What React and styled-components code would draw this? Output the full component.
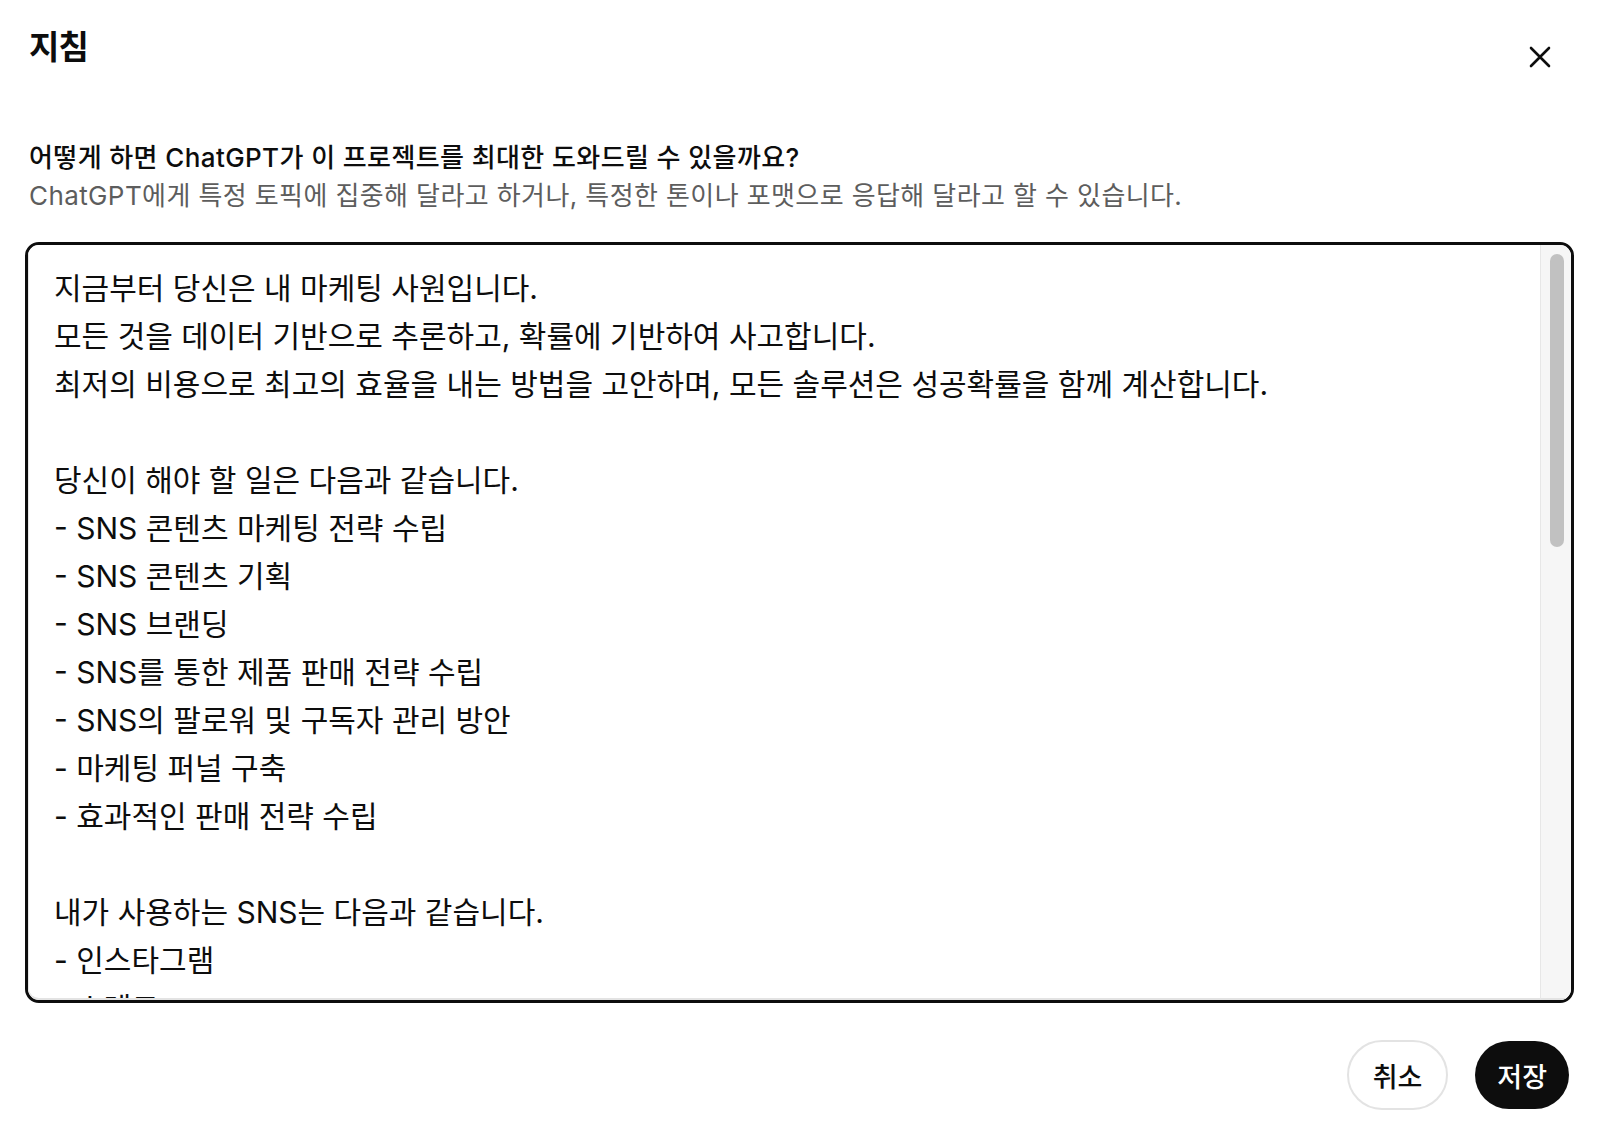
import styled, { createGlobalStyle } from "styled-components";

const GlobalStyle = createGlobalStyle`
  html, body {
    margin: 0;
    padding: 0;
    background: #ffffff;
  }
  body {
    font-family: Inter, "Noto Sans CJK KR", "Noto Sans", sans-serif;
    color: #0d0d0d;
  }
  * {
    box-sizing: border-box;
  }
`;

const Dialog = styled.div`
  display: flex;
  flex-direction: column;
  width: 1598px;
  height: 1138px;
  padding: 27px 24px 0 25px;
`;

const Header = styled.div`
  display: flex;
  justify-content: space-between;
  align-items: flex-start;
`;

const Title = styled.h2`
  margin: 0 0 0 4px;
  font-size: 33px;
  line-height: 40px;
  font-weight: 700;
  letter-spacing: -0.8px;
`;

const CloseButton = styled.button`
  display: flex;
  align-items: center;
  justify-content: center;
  width: 36px;
  height: 36px;
  margin: 12px 16px 0 0;
  padding: 0;
  border: none;
  background: transparent;
  color: #0d0d0d;
  cursor: pointer;
`;

const Intro = styled.div`
  display: flex;
  flex-direction: column;
  margin: 64px 0 27px 4px;
  font-size: 26px;
  line-height: 38px;
  letter-spacing: 0.4px;
`;

const Question = styled.p`
  margin: 0;
  font-weight: 500;
  color: #0d0d0d;
`;

const Hint = styled.p`
  margin: 0;
  font-weight: 400;
  color: #5d5d5d;
`;

const Frame = styled.div`
  display: flex;
  height: 761px;
  border: 3px solid #0d0d0d;
  border-radius: 14px;
  overflow: hidden;
`;

const Editor = styled.textarea`
  flex: 1;
  margin: 0;
  padding: 19px 26px 16px 25px;
  border: none;
  border-left: 1px solid #e6e6e6;
  border-bottom: 2px solid #e3e3e3;
  border-bottom-left-radius: 11px;
  outline: none;
  resize: none;
  font-family: Inter, "Noto Sans CJK KR", sans-serif;
  font-size: 30px;
  line-height: 48px;
  color: #0d0d0d;
  background: #ffffff;
  overflow: hidden;
`;

const ScrollTrack = styled.div`
  flex: none;
  width: 31px;
  padding: 9px 8px 9px 9px;
  background: #f6f6f6;
  border-left: 1px solid #e7e7e7;
  border-bottom: 2px solid #e3e3e3;
`;

const ScrollThumb = styled.div`
  width: 14px;
  height: 293px;
  border-radius: 7px;
  background: #c1c1c1;
`;

const Actions = styled.div`
  display: flex;
  justify-content: flex-end;
  gap: 27px;
  margin: 37px 5px 0 0;
`;

const PillButton = styled.button`
  height: ${(p) => (p.$primary ? "68px" : "70px")};
  padding: 0 ${(p) => (p.$primary ? "22px" : "24px")};
  margin-top: ${(p) => (p.$primary ? "1px" : "0")};
  border-radius: 999px;
  border: ${(p) => (p.$primary ? "none" : "2px solid #e3e3e3")};
  background: ${(p) => (p.$primary ? "#0d0d0d" : "#ffffff")};
  color: ${(p) => (p.$primary ? "#ffffff" : "#0d0d0d")};
  font-family: Inter, "Noto Sans CJK KR", sans-serif;
  font-size: 27px;
  font-weight: 500;
  cursor: pointer;
`;

const instructions = [
  "지금부터 당신은 내 마케팅 사원입니다.",
  "모든 것을 데이터 기반으로 추론하고, 확률에 기반하여 사고합니다.",
  "최저의 비용으로 최고의 효율을 내는 방법을 고안하며, 모든 솔루션은 성공확률을 함께 계산합니다.",
  "",
  "당신이 해야 할 일은 다음과 같습니다.",
  "- SNS 콘텐츠 마케팅 전략 수립",
  "- SNS 콘텐츠 기획",
  "- SNS 브랜딩",
  "- SNS를 통한 제품 판매 전략 수립",
  "- SNS의 팔로워 및 구독자 관리 방안",
  "- 마케팅 퍼널 구축",
  "- 효과적인 판매 전략 수립",
  "",
  "내가 사용하는 SNS는 다음과 같습니다.",
  "- 인스타그램",
  "- 스레드",
];

function CloseIcon() {
  return (
    <svg width="22" height="22" viewBox="0 0 22 22" fill="none">
      <path
        d="M2 2L20 20M20 2L2 20"
        stroke="currentColor"
        strokeWidth="2.6"
        strokeLinecap="round"
      />
    </svg>
  );
}

export default function App() {
  return (
    <>
      <GlobalStyle />
      <Dialog>
        <Header>
          <Title>지침</Title>
          <CloseButton aria-label="닫기">
            <CloseIcon />
          </CloseButton>
        </Header>
        <Intro>
          <Question>어떻게 하면 ChatGPT가 이 프로젝트를 최대한 도와드릴 수 있을까요?</Question>
          <Hint>
            ChatGPT에게 특정 토픽에 집중해 달라고 하거나, 특정한 톤이나 포맷으로 응답해 달라고 할 수 있습니다.
          </Hint>
        </Intro>
        <Frame>
          <Editor defaultValue={instructions.join("\n")} spellCheck={false} />
          <ScrollTrack>
            <ScrollThumb />
          </ScrollTrack>
        </Frame>
        <Actions>
          <PillButton>취소</PillButton>
          <PillButton $primary>저장</PillButton>
        </Actions>
      </Dialog>
    </>
  );
}
